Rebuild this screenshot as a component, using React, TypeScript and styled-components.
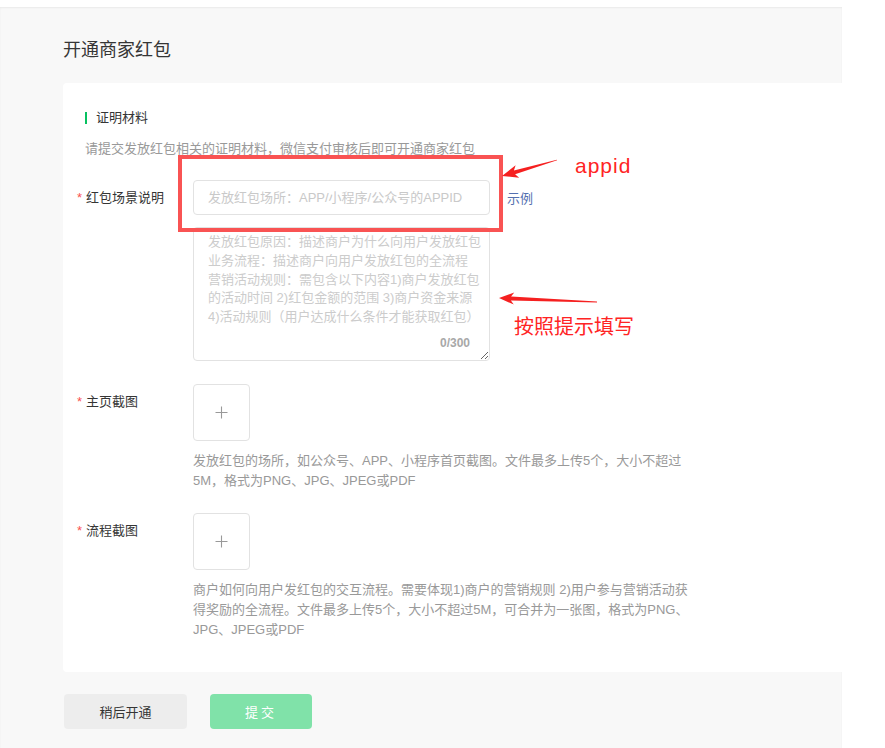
import React from 'react'
import styled, { createGlobalStyle } from 'styled-components'

const GlobalStyle = createGlobalStyle`
  html, body {
    margin: 0;
    padding: 0;
    background: #fff;
  }
  body {
    font-family: "Liberation Sans", "Noto Sans CJK SC", sans-serif;
    color: #353535;
  }
  * {
    box-sizing: border-box;
  }
`

const Root = styled.div`
  position: relative;
  width: 885px;
  height: 748px;
  overflow: hidden;
  padding-top: 7px;
`

const Page = styled.div`
  width: 842px;
  min-height: 741px;
  background: #f8f8f8;
  box-shadow: inset 0 1px 2px rgba(0, 0, 0, 0.06);
  padding: 31px 0 40px 63px;
`

const PageTitle = styled.h1`
  margin: 0;
  font-size: 18px;
  font-weight: 400;
  line-height: 24px;
  color: #353535;
`

const Card = styled.div`
  margin-top: 21px;
  background: #fff;
  border-radius: 4px 0 0 4px;
  padding: 25px 0 32px 22px;
`

const SectionTitle = styled.div`
  display: flex;
  align-items: center;
  gap: 9px;
  font-size: 13px;
  line-height: 20px;
  color: #353535;

  &::before {
    content: '';
    width: 2px;
    height: 12px;
    background: #07c160;
  }
`

const Desc = styled.p`
  margin: 11px 0 0;
  font-size: 13px;
  line-height: 20px;
  color: #999;
`

const Form = styled.div`
  margin-top: 21px;
`

const Row = styled.div<{ $gap?: number }>`
  display: grid;
  grid-template-columns: 108px 1fr;
  margin-top: ${p => p.$gap ?? 0}px;
`

const Label = styled.div`
  margin-left: -8px;
  font-size: 13px;
  line-height: 35px;
  color: #353535;
`

const Star = styled.span`
  display: inline-block;
  width: 9px;
  color: #fa5151;
`

const Field = styled.div`
  display: flex;
  flex-direction: column;
  align-items: flex-start;
`

const InputLine = styled.div`
  display: flex;
  align-items: center;
  gap: 17px;
`

const Input = styled.input`
  width: 297px;
  height: 35px;
  border: 1px solid #e2e2e2;
  border-radius: 4px;
  padding: 0 14px;
  font-family: inherit;
  font-size: 13px;
  color: #353535;
  outline: none;

  &::placeholder {
    color: #c9c9c9;
  }
`

const Link = styled.a`
  font-size: 13px;
  color: #5470b0;
  text-decoration: none;
  cursor: pointer;
`

const TextareaWrap = styled.div`
  position: relative;
  margin-top: 12px;
  width: 297px;
  height: 134px;
`

const Textarea = styled.textarea`
  display: block;
  width: 297px;
  height: 134px;
  border: 1px solid #e2e2e2;
  border-radius: 4px;
  padding: 5px 7px 5px 14px;
  font-family: inherit;
  font-size: 13px;
  line-height: 18.8px;
  color: #353535;
  outline: none;

  &::placeholder {
    color: #cccccc;
  }
`

const Counter = styled.span`
  position: absolute;
  right: 20px;
  bottom: 11px;
  font-size: 12px;
  line-height: 14px;
  font-weight: 700;
  color: #a8a8a8;
`

const Upload = styled.div`
  width: 57px;
  height: 57px;
  border: 1px solid #e2e2e2;
  border-radius: 4px;
  display: flex;
  align-items: center;
  justify-content: center;
  cursor: pointer;
`

const Hint = styled.p`
  margin: 10px 0 0;
  max-width: 502px;
  font-size: 13px;
  line-height: 20px;
  color: #999;
`

const Footer = styled.div`
  display: flex;
  gap: 23px;
  margin-top: 22px;
  padding-left: 1px;
`

const Button = styled.button<{ $primary?: boolean }>`
  height: 35px;
  width: ${p => (p.$primary ? 102 : 123)}px;
  border: none;
  border-radius: 4px;
  font-family: inherit;
  font-size: 13px;
  letter-spacing: ${p => (p.$primary ? 3 : 0)}px;
  background: ${p => (p.$primary ? '#80e2a9' : '#ededed')};
  color: ${p => (p.$primary ? '#fff' : '#353535')};
  cursor: pointer;
`

const RedBox = styled.div`
  position: absolute;
  left: 178px;
  top: 155px;
  width: 325px;
  height: 77px;
  border: 4px solid #f95353;
  pointer-events: none;
`

const Arrows = styled.svg`
  position: absolute;
  left: 0;
  top: 0;
  pointer-events: none;
`

const Note = styled.div<{ $x: number; $y: number; $size: number }>`
  position: absolute;
  left: ${p => p.$x}px;
  top: ${p => p.$y}px;
  font-size: ${p => p.$size}px;
  line-height: 24px;
  color: #ff2424;
  white-space: nowrap;
`

const AppidNote = styled(Note)`
  font-family: "Liberation Sans", sans-serif;
  letter-spacing: 1px;
`

const PlusIcon = () => (
  <svg width="13" height="13" viewBox="0 0 13 13">
    <path d="M6.5 0.5v12M0.5 6.5h12" stroke="#999" strokeWidth="1.1" fill="none" />
  </svg>
)

const placeholder =
  '发放红包原因：描述商户为什么向用户发放红包\n' +
  '业务流程：描述商户向用户发放红包的全流程\n' +
  '营销活动规则：需包含以下内容1)商户发放红包的活动时间 2)红包金额的范围 3)商户资金来源 4)活动规则（用户达成什么条件才能获取红包）'

export default function App() {
  return (
    <Root>
      <GlobalStyle />
      <Page>
        <PageTitle>开通商家红包</PageTitle>
        <Card>
          <SectionTitle>证明材料</SectionTitle>
          <Desc>请提交发放红包相关的证明材料，微信支付审核后即可开通商家红包</Desc>
          <Form>
            <Row>
              <Label><Star>*</Star>红包场景说明</Label>
              <Field>
                <InputLine>
                  <Input placeholder="发放红包场所：APP/小程序/公众号的APPID" />
                  <Link>示例</Link>
                </InputLine>
                <TextareaWrap>
                  <Textarea placeholder={placeholder} />
                  <Counter>0/300</Counter>
                </TextareaWrap>
              </Field>
            </Row>
            <Row $gap={23}>
              <Label><Star>*</Star>主页截图</Label>
              <Field>
                <Upload><PlusIcon /></Upload>
                <Hint>发放红包的场所，如公众号、APP、小程序首页截图。文件最多上传5个，大小不超过5M，格式为PNG、JPG、JPEG或PDF</Hint>
              </Field>
            </Row>
            <Row $gap={22}>
              <Label><Star>*</Star>流程截图</Label>
              <Field>
                <Upload><PlusIcon /></Upload>
                <Hint>商户如何向用户发红包的交互流程。需要体现1)商户的营销规则 2)用户参与营销活动获得奖励的全流程。文件最多上传5个，大小不超过5M，可合并为一张图，格式为PNG、JPG、JPEG或PDF</Hint>
              </Field>
            </Row>
          </Form>
        </Card>
        <Footer>
          <Button>稍后开通</Button>
          <Button $primary>提交</Button>
        </Footer>
      </Page>

      <RedBox />
      <Arrows width="885" height="748" viewBox="0 0 885 748">
        <polygon
          fill="#f52020"
          points="502,176 519.2,177.7 515.1,174.3 557.1,160.3 556.9,159.7 513.9,170.5 515.6,165.3"
        />
        <polygon
          fill="#f52020"
          points="499,298 513.75,304.6 510.9,300.5 597,302.4 597,301.6 511.1,296.5 514.25,292.6"
        />
      </Arrows>
      <AppidNote $x={575} $y={154} $size={21}>appid</AppidNote>
      <Note $x={514} $y={315} $size={20}>按照提示填写</Note>
    </Root>
  )
}
